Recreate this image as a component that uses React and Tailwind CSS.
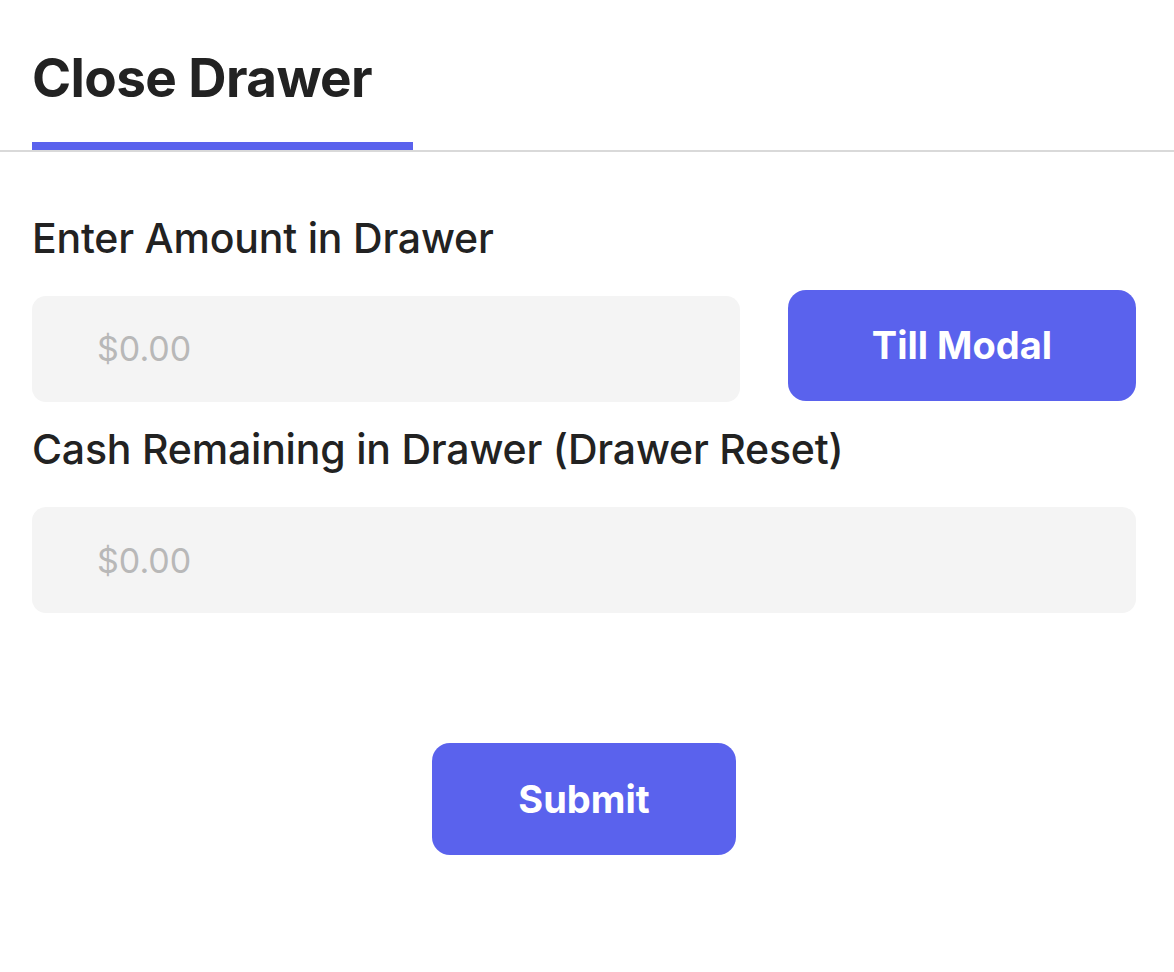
import React from "react";

export default function App() {
  return (
    <div className="min-h-[972px] w-full bg-white text-[#222222]" style={{ fontFamily: "Inter, 'Noto Sans', sans-serif" }}>
      <div className="border-b-2 border-[#d9d9d9] pl-8 pr-[38px]">
        <div className="w-[381px] border-b-[8px] border-[#5a62ed] pt-[46px] pb-[32px]">
          <h1 className="text-[53px] font-bold leading-[64px] tracking-[-0.6px]">Close Drawer</h1>
        </div>
      </div>
      <div className="pl-8 pr-[38px] pt-[62px]">
        <label className="block text-[41px] font-medium leading-[48px] tracking-[-0.2px]">Enter Amount in Drawer</label>
        <div className="mt-[31px] flex items-center gap-12">
          <div className="flex h-[106px] flex-1 items-center rounded-[14px] bg-[#f4f4f4] pl-[65px]">
            <span className="text-[34px] text-[#b8b8b8]">$0.00</span>
          </div>
          <button className="h-[111px] w-[348px] -translate-y-[3px] rounded-[18px] bg-[#5a62ed] text-[38px] font-bold text-white">Till Modal</button>
        </div>
        <label className="mt-[21px] block text-[41px] font-medium leading-[48px] tracking-[-0.2px]">Cash Remaining in Drawer (Drawer Reset)</label>
        <div className="mt-[34px] flex h-[106px] items-center rounded-[14px] bg-[#f4f4f4] pl-[65px]">
          <span className="text-[34px] text-[#b8b8b8]">$0.00</span>
        </div>
        <div className="mt-[130px] flex justify-center">
          <button className="h-[112px] w-[304px] rounded-[18px] bg-[#5a62ed] text-[38px] font-bold text-white">Submit</button>
        </div>
      </div>
    </div>
  );
}
